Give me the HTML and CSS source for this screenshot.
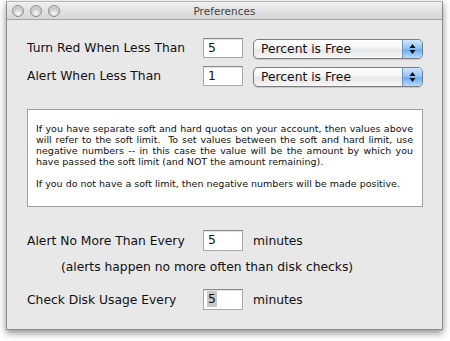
FILE: index.html
```html
<!DOCTYPE html>
<html>
<head>
<meta charset="utf-8">
<link rel="stylesheet" href="styles.css">
</head>
<body>
<div class="window">
  <div class="titlebar">
    <div class="lights">
      <span class="light"></span><span class="light"></span><span class="light"></span>
    </div>
    <div class="title">Preferences</div>
    <div></div>
  </div>
  <div class="content">
    <div class="row row-first">
      <span class="label">Turn Red When Less Than</span>
      <span class="field">5</span>
      <span class="popup">
        <span class="popup-text">Percent is Free</span>
        <span class="popup-arrows"><svg width="7" height="12" viewBox="0 0 7 12"><path d="M3.5 1 L6.5 5 L0.5 5 Z M0.5 7 L6.5 7 L3.5 11 Z" fill="#111"/></svg></span>
      </span>
    </div>
    <div class="row row-second">
      <span class="label">Alert When Less Than</span>
      <span class="field">1</span>
      <span class="popup">
        <span class="popup-text">Percent is Free</span>
        <span class="popup-arrows"><svg width="7" height="12" viewBox="0 0 7 12"><path d="M3.5 1 L6.5 5 L0.5 5 Z M0.5 7 L6.5 7 L3.5 11 Z" fill="#111"/></svg></span>
      </span>
    </div>
    <div class="info">
      <div class="para">
        <span class="jline">If you have separate soft and hard quotas on your account, then values above</span>
        <span class="jline">will refer to the soft limit.&nbsp; To set values between the soft and hard limit, use</span>
        <span class="jline">negative numbers -- in this case the value will be the amount by which you</span>
        <span class="line">have passed the soft limit (and NOT the amount remaining).</span>
      </div>
      <div class="para">
        <span class="line">If you do not have a soft limit, then negative numbers will be made positive.</span>
      </div>
    </div>
    <div class="row row-third">
      <span class="label">Alert No More Than Every</span>
      <span class="field">5</span>
      <span class="unit">minutes</span>
    </div>
    <div class="note">(alerts happen no more often than disk checks)</div>
    <div class="row row-fourth">
      <span class="label">Check Disk Usage Every</span>
      <span class="field"><span class="sel">5</span></span>
      <span class="unit">minutes</span>
    </div>
  </div>
</div>
</body>
</html>
```
FILE: styles.css
```css
html, body {
  margin: 0;
  padding: 0;
  background: #ffffff;
}
body {
  width: 450px;
  height: 341px;
  overflow: hidden;
  font-family: "DejaVu Sans", sans-serif;
  color: #111;
}
.window {
  margin: 1px 0 0 6px;
  width: 437px;
  height: 329px;
  box-sizing: border-box;
  border: 1px solid #8e8e8e;
  border-top-color: #b8b8b8;
  background: #e8e8e8;
  box-shadow: 0 3px 7px rgba(0, 0, 0, 0.45);
  display: flex;
  flex-direction: column;
}
.titlebar {
  height: 17px;
  border-bottom: 1px solid #a4a4a4;
  background: linear-gradient(#f1f1f1, #dedede 60%, #d6d6d6);
  display: grid;
  grid-template-columns: 1fr auto 1fr;
  align-items: center;
}
.lights {
  display: flex;
  gap: 6px;
  padding-left: 5px;
  padding-top: 1px;
}
.light {
  width: 12px;
  height: 12px;
  border-radius: 50%;
  box-sizing: border-box;
  border: 1px solid #8c8c8c;
  background: radial-gradient(circle at 50% 75%, #fafafa 0%, #d2d2d2 45%, #a9a9a9 100%);
  box-shadow: inset 0 1px 1px rgba(255,255,255,0.6);
}
.title {
  font-size: 10.4px;
  color: #444;
  letter-spacing: 0.1px;
}
.content {
  padding: 18px 0 0 20px;
  display: flex;
  flex-direction: column;
}
.row {
  display: flex;
  align-items: center;
  height: 20px;
}
.row-second { margin-top: 8px; }
.row-third { margin-top: 23px; height: 21px; }
.row-fourth { margin-top: 14px; height: 21px; }
.label {
  width: 176px;
  font-size: 12.3px;
  color: #111;
}
.field {
  width: 40px;
  height: 20px;
  box-sizing: border-box;
  background: #fff;
  border: 1px solid #a8a8a8;
  border-top-color: #8a8a8a;
  box-shadow: inset 0 1px 0 #e4e4e4;
  font-size: 12.3px;
  line-height: 18px;
  padding-left: 4px;
}
.row-third .field, .row-fourth .field { height: 21px; line-height: 19px; }
.sel {
  background: #c9c9c9;
  display: inline-block;
  padding: 0 1px;
  margin-left: -1px;
  line-height: 16px;
}
.popup {
  margin-left: 10px;
  margin-top: 2px;
  width: 170px;
  height: 20px;
  box-sizing: border-box;
  border: 1px solid #7c7c7c;
  border-radius: 5px;
  display: flex;
  overflow: hidden;
  background: linear-gradient(#ffffff, #f4f4f4 45%, #e6e6e6 55%, #f7f7f7);
  box-shadow: 0 1px 1px rgba(0,0,0,0.15);
}
.popup-text {
  flex: 1;
  font-size: 12.3px;
  line-height: 18px;
  padding-left: 7px;
}
.popup-arrows {
  width: 19px;
  border-left: 1px solid #6d93c5;
  background: linear-gradient(#cfe6fd, #93c6f8 45%, #6aaef5 55%, #b7dcfd);
  display: flex;
  align-items: center;
  justify-content: center;
}
.info {
  margin-top: 23px;
  width: 396px;
  height: 98px;
  box-sizing: border-box;
  background: #fff;
  border: 1px solid #a0a0a0;
  padding: 13px 9px 0 8px;
  font-size: 9.5px;
  line-height: 11px;
  color: #111;
}
.para + .para { margin-top: 11px; }
.jline, .line {
  display: block;
  white-space: nowrap;
}
.jline {
  white-space: normal;
  text-align: justify;
  text-align-last: justify;
}
.unit {
  margin-left: 10px;
  font-size: 12.3px;
}
.note {
  margin-top: 8px;
  height: 16px;
  line-height: 16px;
  padding-left: 34px;
  font-size: 12.3px;
}
```
